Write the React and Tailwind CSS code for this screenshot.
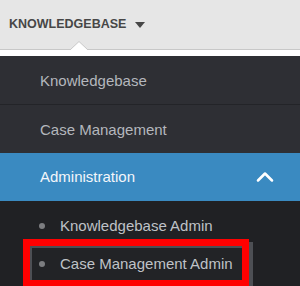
import { ChevronUp } from 'lucide-react'

// Dropdown menu with Administration expanded, "Case Management Admin" boxed in red

function SubItem({ label }) {
  return (
    <div className="flex items-center gap-[15px]">
      <span className="w-[6px] h-[6px] rounded-full bg-[#7c7d80]" />
      <span>{label}</span>
    </div>
  )
}

export default function App() {
  return (
    <div className="w-[300px] h-[286px] overflow-hidden bg-[#202124] font-['Liberation_Sans',Arial,sans-serif]">
      {/* top bar */}
      <div className="relative h-[50px] bg-[#e6e6e6] border-b border-[#c8c8c8] flex items-center pl-[9px] gap-[9px]">
        <span className="text-[12.5px] font-bold text-[#474747]">KNOWLEDGEBASE</span>
        <svg width="10" height="6" viewBox="0 0 10 6" className="mt-[1px]">
          <polygon points="0,0 10,0 5,6" fill="#474747" />
        </svg>
        <svg width="18" height="9" viewBox="0 0 18 9" className="absolute left-[70px] top-[41px]">
          <polygon points="0,9 9,0.5 18,9" fill="#ffffff" />
          <polyline points="0,9 9,0.5 18,9" fill="none" stroke="#c8c8c8" strokeWidth="1" />
        </svg>
      </div>
      <div className="h-[6px] bg-white" />

      {/* main items */}
      <div className="bg-[#2e2f34] text-[15px] text-[#b4b7bd]">
        <div className="h-[49px] flex items-center pl-10 pt-[2px] border-b border-[#232428]">Knowledgebase</div>
        <div className="h-[48px] flex items-center pl-10 pt-[2px]">Case Management</div>
      </div>

      <div className="h-[48px] bg-[#3a8ac1] flex items-center justify-between pl-10 pr-[21px] text-[15px] text-[#f3f6fa]">
        <span>Administration</span>
        <ChevronUp size={28} strokeWidth={2.2} color="#ffffff" />
      </div>

      {/* sub items */}
      <div className="pt-[12px] text-[15px] text-[#bfc2c7]">
        <div className="h-[26px] flex items-center pl-[39px]">
          <SubItem label="Knowledgebase Admin" />
        </div>
        <div className="ml-[23px] w-[226px] border-[7px] border-[#ff0000] shadow-[4px_3px_0_#4d4f54]">
          <div className="h-[34px] flex items-center pl-[7px] border-t-2 border-l-2 border-[#4d4f54] bg-[#222326]">
            <SubItem label="Case Management Admin" />
          </div>
        </div>
      </div>
    </div>
  )
}
